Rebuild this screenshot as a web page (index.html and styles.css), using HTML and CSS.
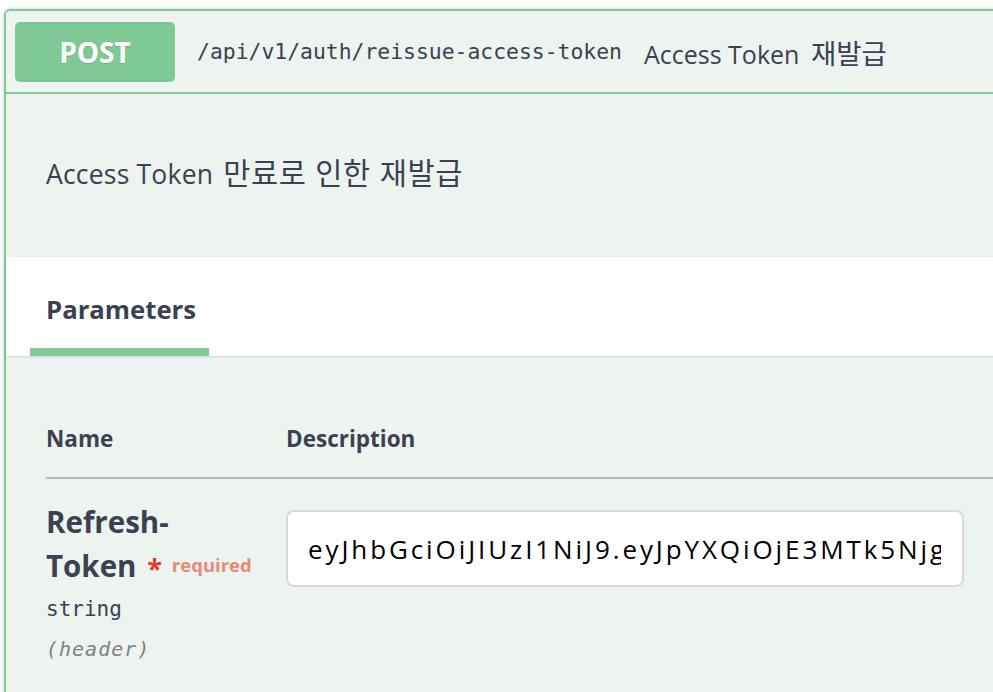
FILE: index.html
```html
<!DOCTYPE html>
<html lang="ko">
<head>
<meta charset="utf-8">
<link rel="stylesheet" href="styles.css">
</head>
<body>
<div class="page">
  <div class="opblock">
    <div class="summary">
      <span class="method">POST</span>
      <span class="path">/api/v1/auth/reissue-access-token</span>
      <span class="summary-desc">Access Token <span class="ko-sm">재발급</span></span>
    </div>
    <div class="desc"><span>Access Token <span class="ko">만료로 인한 재발급</span></span></div>
    <div class="section-header">
      <div class="tab">Parameters</div>
    </div>
    <div class="params">
      <div class="thead">
        <div class="col-name">Name</div>
        <div class="col-desc">Description</div>
      </div>
      <div class="row">
        <div class="col-name">
          <div class="pname">Refresh-<br>Token <span class="star">*</span><span class="req">required</span></div>
          <div class="ptype">string</div>
          <div class="pin">(header)</div>
        </div>
        <div class="col-desc">
          <div class="input"><div class="input-text">eyJhbGciOiJIUzI1NiJ9.eyJpYXQiOjE3MTk5NjgyMzEsImV4cCI6MTcyMDU3MzAzMX0</div></div>
        </div>
      </div>
    </div>
  </div>
</div>
</body>
</html>
```
FILE: styles.css
```css
html, body {
  margin: 0;
  padding: 0;
  background: #ffffff;
  overflow: hidden;
}
.page {
  width: 993px;
  height: 692px;
  overflow: hidden;
  padding: 9px 0 0 4px;
  box-sizing: border-box;
}
.opblock {
  width: 1100px;
  height: 800px;
  border: 2px solid #80c998;
  border-radius: 6px;
  background: #edf4ef;
  box-shadow: 0 0 4px rgba(0,0,0,0.2);
  font-family: "Open Sans", "Noto Sans CJK KR", sans-serif;
  color: #3b4151;
}
.summary {
  display: flex;
  align-items: center;
  height: 83px;
  padding-left: 9px;
  border-bottom: 2px solid #80c998;
  box-sizing: border-box;
}
.method {
  width: 160px;
  height: 60px;
  border-radius: 5px;
  background: #7fc996;
  color: #fff;
  font-family: "Open Sans", sans-serif;
  font-weight: 700;
  font-size: 28px;
  display: flex;
  align-items: center;
  justify-content: center;
  text-shadow: 0 1px 0 rgba(0,0,0,0.15);
}
.path {
  margin-left: 22px;
  font-family: "DejaVu Sans Mono", monospace;
  font-size: 21.4px;
  color: #3b4151;
}
.summary-desc {
  margin-left: 22px;
  font-size: 25px;
  color: #3b4151;
}
.ko-sm {
  font-family: "Noto Sans CJK KR", sans-serif;
  font-size: 27.5px;
  margin-left: 5px;
}
.desc {
  height: 163px;
  padding: 0 0 9px 40px;
  display: flex;
  align-items: center;
  font-size: 26.5px;
  letter-spacing: 0.2px;
  box-sizing: border-box;
}
.ko {
  font-family: "Noto Sans CJK KR", sans-serif;
  font-size: 29.5px;
  letter-spacing: 0.6px;
  margin-left: 3px;
}
.section-header {
  background: #ffffff;
  height: 99px;
  display: flex;
  align-items: flex-end;
  padding-left: 24px;
  box-shadow: 0 1px 2px rgba(0,0,0,0.12);
  position: relative;
}
.tab {
  font-family: "Open Sans", sans-serif;
  font-weight: 700;
  font-size: 25.7px;
  line-height: 36px;
  padding: 0 16px 20px 16px;
  border-bottom: 8px solid #80c998;
  width: 179px;
  box-sizing: border-box;
}
.params {
  padding: 0 0 0 40px;
}
.thead {
  display: flex;
  height: 123px;
  padding-top: 68px;
  box-sizing: border-box;
  border-bottom: 2px solid #b5b7b9;
  font-family: "Open Sans", sans-serif;
  font-weight: 700;
  font-size: 22.5px;
  line-height: 30px;
}
.col-name {
  width: 240px;
  flex: none;
}
.row {
  display: flex;
  padding-top: 21px;
}
.pname {
  font-family: "Open Sans", sans-serif;
  font-weight: 700;
  font-size: 29.5px;
  line-height: 43px;
}
.star {
  color: #e53935;
  font-size: 27px;
  margin-left: 3px;
  vertical-align: -1px;
}
.req {
  color: #e8887e;
  font-size: 18.5px;
  margin-left: 10px;
  vertical-align: 5px;
}
.ptype {
  font-family: "DejaVu Sans Mono", monospace;
  font-size: 21px;
  margin-top: 6px;
  line-height: 28px;
}
.pin {
  font-family: "DejaVu Sans Mono", monospace;
  font-style: italic;
  font-size: 20px;
  letter-spacing: 1px;
  line-height: 28px;
  color: #808080;
  margin-top: 12px;
}
.col-desc {
  flex: none;
}
.input {
  width: 678px;
  height: 77px;
  margin-top: 10px;
  box-sizing: border-box;
  background: #fff;
  border: 2px solid #d9d9d9;
  border-radius: 8px;
  padding: 0 21px 0 20px;
  display: flex;
  align-items: center;
}
.input-text {
  width: 100%;
  overflow: hidden;
  white-space: nowrap;
  font-family: "Open Sans", sans-serif;
  font-size: 26px;
  letter-spacing: 2.9px;
  color: #000;
}
```
